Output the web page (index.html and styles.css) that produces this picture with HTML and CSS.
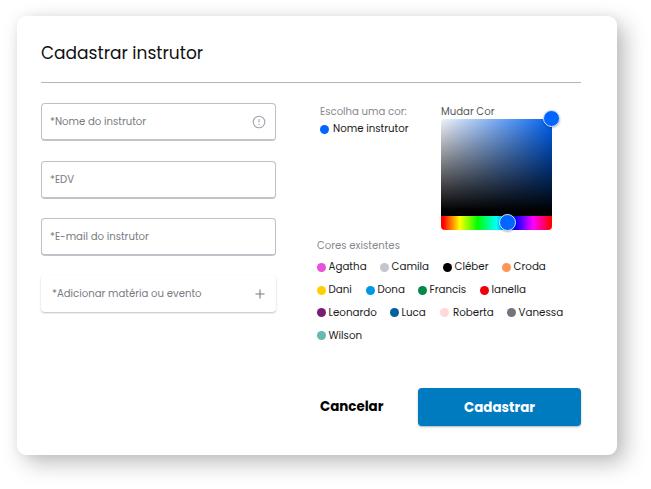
FILE: index.html
```html
<!DOCTYPE html>
<html lang="pt-BR">
<head>
<meta charset="utf-8">
<title>Cadastrar instrutor</title>
<link rel="stylesheet" href="styles.css">
</head>
<body>
<main class="card">
  <h1 class="title">Cadastrar instrutor</h1>
  <div class="content">
    <form class="fields">
      <div class="field"><span>*Nome do instrutor</span>
        <svg class="info" viewBox="0 0 14 14"><circle cx="7" cy="7" r="5.8"/><path d="M7 4v3.6M7 9v1"/></svg>
      </div>
      <div class="field"><span>*EDV</span></div>
      <div class="field"><span>*E-mail do instrutor</span></div>
      <div class="field add"><span>*Adicionar matéria ou evento</span>
        <svg class="plus" viewBox="0 0 10 10"><path d="M5 .5v9M.5 5h9"/></svg>
      </div>
    </form>
    <section class="colors">
      <div class="choose">
        <div class="chosen">
          <div class="label">Escolha uma cor:</div>
          <div class="name"><i class="dot blue"></i><span>Nome instrutor</span></div>
        </div>
        <div class="picker">
          <div class="picker-label">Mudar Cor</div>
          <div class="palette">
            <div class="shade"></div>
            <div class="hue"></div>
            <i class="knob knob-shade"></i>
            <i class="knob knob-hue"></i>
          </div>
        </div>
      </div>
      <div class="label existing">Cores existentes</div>
      <div class="names row1">
        <div class="name"><i class="dot pink"></i><span>Agatha</span></div>
        <div class="name"><i class="dot silver"></i><span>Camila</span></div>
        <div class="name"><i class="dot black"></i><span>Cléber</span></div>
        <div class="name"><i class="dot orange"></i><span>Croda</span></div>
      </div>
      <div class="names row2">
        <div class="name"><i class="dot yellow"></i><span>Dani</span></div>
        <div class="name"><i class="dot sky"></i><span>Dona</span></div>
        <div class="name"><i class="dot green"></i><span>Francis</span></div>
        <div class="name"><i class="dot red"></i><span>Ianella</span></div>
      </div>
      <div class="names row3">
        <div class="name"><i class="dot purple"></i><span>Leonardo</span></div>
        <div class="name"><i class="dot navy"></i><span>Luca</span></div>
        <div class="name roberta"><i class="dot rose"></i><span>Roberta</span></div>
        <div class="name"><i class="dot gray"></i><span>Vanessa</span></div>
      </div>
      <div class="names">
        <div class="name"><i class="dot teal"></i><span>Wilson</span></div>
      </div>
    </section>
  </div>
  <div class="actions">
    <button class="cancel">Cancelar</button>
    <button class="submit">Cadastrar</button>
  </div>
</main>
</body>
</html>
```

FILE: styles.css
```css
* { box-sizing: border-box; }
body {
  margin: 0;
  padding: 16px 0 0 17px;
  height: 489px;
  overflow: hidden;
  background: #fff;
  font-family: Poppins, Inter, sans-serif;
  font-size: 10.15px;
  line-height: 16px;
  color: #1a1a1a;
}
.card {
  width: 600px;
  height: 439px;
  padding: 0 36px 0 24px;
  border-radius: 9px;
  background: #fff;
  box-shadow: 8px 8px 22px rgba(0, 0, 0, .26), 0 0 12px rgba(0, 0, 0, .05);
}
.title {
  margin: 0;
  height: 67px;
  padding-top: 24px;
  border-bottom: 1px solid #b4b5b7;
  font-size: 17px;
  line-height: 26px;
  font-weight: 400;
  color: #111;
}
.content { display: flex; height: 305px; padding-top: 20px; }
.fields { display: flex; flex-direction: column; gap: 20px; width: 235px; }
.field {
  display: flex;
  align-items: center;
  justify-content: space-between;
  height: 38px;
  padding: 0 9px 0 8px;
  border: 1px solid #bcc1c8;
  border-bottom: 2px solid #bfc4ca;
  border-radius: 4px;
  color: #777b82;
}
.field:nth-child(3) { margin-top: -1px; }
.field.add {
  height: 37px;
  margin-top: -1px;
  padding: 0 11px;
  border: 0;
  box-shadow: 0 1px 2px rgba(70, 80, 80, .35);
}
.info { width: 14px; height: 14px; fill: none; stroke: #a0a5ad; stroke-width: 1.1; }
.plus { width: 10px; height: 10px; fill: none; stroke: #777b82; stroke-width: 1.1; }
.colors { width: 264px; margin-left: 41px; }
.choose { display: flex; height: 127px; }
.chosen { width: 124px; padding: 1px 0 0 3px; }
.label { color: #85888f; }
.name { display: flex; align-items: center; white-space: nowrap; font-size: 10.3px; }
.chosen .name { margin-top: 1px; font-size: 10.2px; }
.dot { width: 9px; height: 9px; margin-right: 2.5px; border-radius: 50%; flex: none; }
.roberta .dot { margin-right: 4px; }
.chosen .dot { margin-right: 4px; }
.picker-label { height: 15.5px; line-height: 18px; color: #55585c; }
.palette { position: relative; width: 111px; border-radius: 4px; }
.shade {
  height: 97.5px;
  border-radius: 4px 4px 0 0;
  background: linear-gradient(to top, #000 5%, transparent), linear-gradient(to right, #f1f3f8, #0061f2);
}
.hue {
  height: 13.5px;
  border-radius: 0 0 4px 4px;
  background: linear-gradient(to right, #f00 2%, #ff0 17%, #0f0 33%, #0ff 50%, #00f 67%, #f0f 83%, #f00 99%);
}
.knob {
  position: absolute;
  width: 17px;
  height: 17px;
  border: 1px solid #dce7f8;
  border-radius: 50%;
  background: #0066ff;
  box-shadow: 0 1px 2px rgba(0, 0, 0, .3);
}
.knob-shade { left: 102px; top: -8.5px; }
.knob-hue { left: 58px; top: 95.5px; }
.existing { height: 16px; margin-bottom: 2px; margin-top: 8px; }
.names { display: grid; height: 22.8px; align-items: center; }
.row1 { grid-template-columns: 63px 63px 59px 1fr; }
.row2 { grid-template-columns: 49px 52px 62px 1fr; }
.row3 { grid-template-columns: 73px 50px 67px 1fr; }
.blue { background: #0066ff; }
.pink { background: #e653d8; }
.silver { background: #c1c7cf; }
.black { background: #000; }
.orange { background: #ff9456; }
.yellow { background: #ffcf00; }
.sky { background: #0096e8; }
.green { background: #008a49; }
.red { background: #ed0007; }
.purple { background: #791d73; }
.navy { background: #00629a; }
.rose { background: #ffd9d9; }
.gray { background: #71767c; }
.teal { background: #66b8b2; }
.actions { display: flex; align-items: flex-start; justify-content: flex-end; }
button {
  padding: 0;
  border: 0;
  background: none;
  font: 700 13.4px/20px Poppins, Inter, sans-serif;
}
.cancel { width: 66px; height: 37px; margin-right: 32px; color: #000; text-align: left; }
.submit {
  width: 163px;
  height: 38px;
  padding-top: 2px;
  border-radius: 4px;
  background: #007bc0;
  color: #fff;
  box-shadow: 0 1px 2px rgba(0, 0, 0, .3);
}
```
